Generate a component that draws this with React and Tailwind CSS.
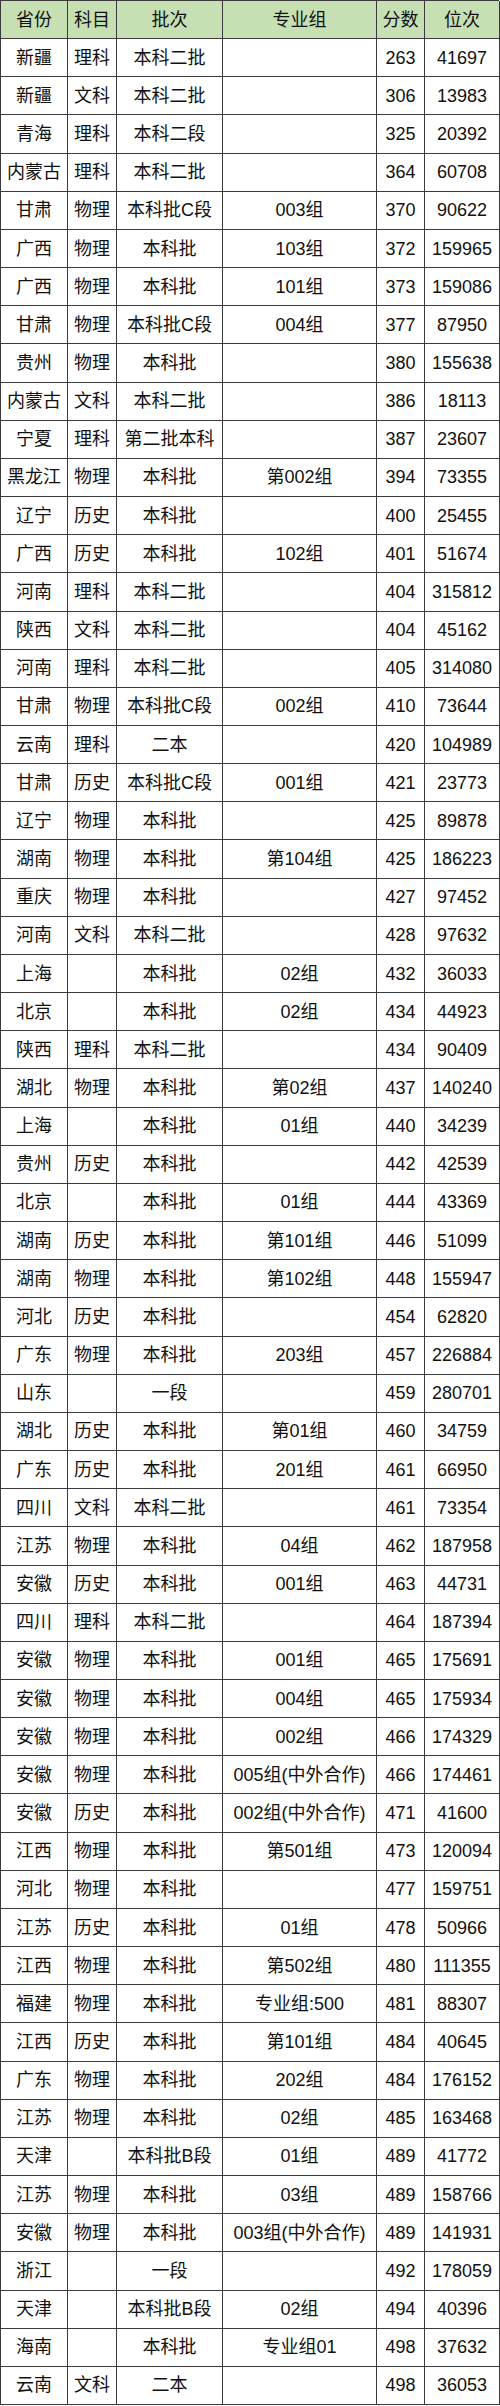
const rows = [
  ["新疆", "理科", "本科二批", "", "263", "41697"],
  ["新疆", "文科", "本科二批", "", "306", "13983"],
  ["青海", "理科", "本科二段", "", "325", "20392"],
  ["内蒙古", "理科", "本科二批", "", "364", "60708"],
  ["甘肃", "物理", "本科批C段", "003组", "370", "90622"],
  ["广西", "物理", "本科批", "103组", "372", "159965"],
  ["广西", "物理", "本科批", "101组", "373", "159086"],
  ["甘肃", "物理", "本科批C段", "004组", "377", "87950"],
  ["贵州", "物理", "本科批", "", "380", "155638"],
  ["内蒙古", "文科", "本科二批", "", "386", "18113"],
  ["宁夏", "理科", "第二批本科", "", "387", "23607"],
  ["黑龙江", "物理", "本科批", "第002组", "394", "73355"],
  ["辽宁", "历史", "本科批", "", "400", "25455"],
  ["广西", "历史", "本科批", "102组", "401", "51674"],
  ["河南", "理科", "本科二批", "", "404", "315812"],
  ["陕西", "文科", "本科二批", "", "404", "45162"],
  ["河南", "理科", "本科二批", "", "405", "314080"],
  ["甘肃", "物理", "本科批C段", "002组", "410", "73644"],
  ["云南", "理科", "二本", "", "420", "104989"],
  ["甘肃", "历史", "本科批C段", "001组", "421", "23773"],
  ["辽宁", "物理", "本科批", "", "425", "89878"],
  ["湖南", "物理", "本科批", "第104组", "425", "186223"],
  ["重庆", "物理", "本科批", "", "427", "97452"],
  ["河南", "文科", "本科二批", "", "428", "97632"],
  ["上海", "", "本科批", "02组", "432", "36033"],
  ["北京", "", "本科批", "02组", "434", "44923"],
  ["陕西", "理科", "本科二批", "", "434", "90409"],
  ["湖北", "物理", "本科批", "第02组", "437", "140240"],
  ["上海", "", "本科批", "01组", "440", "34239"],
  ["贵州", "历史", "本科批", "", "442", "42539"],
  ["北京", "", "本科批", "01组", "444", "43369"],
  ["湖南", "历史", "本科批", "第101组", "446", "51099"],
  ["湖南", "物理", "本科批", "第102组", "448", "155947"],
  ["河北", "历史", "本科批", "", "454", "62820"],
  ["广东", "物理", "本科批", "203组", "457", "226884"],
  ["山东", "", "一段", "", "459", "280701"],
  ["湖北", "历史", "本科批", "第01组", "460", "34759"],
  ["广东", "历史", "本科批", "201组", "461", "66950"],
  ["四川", "文科", "本科二批", "", "461", "73354"],
  ["江苏", "物理", "本科批", "04组", "462", "187958"],
  ["安徽", "历史", "本科批", "001组", "463", "44731"],
  ["四川", "理科", "本科二批", "", "464", "187394"],
  ["安徽", "物理", "本科批", "001组", "465", "175691"],
  ["安徽", "物理", "本科批", "004组", "465", "175934"],
  ["安徽", "物理", "本科批", "002组", "466", "174329"],
  ["安徽", "物理", "本科批", "005组(中外合作)", "466", "174461"],
  ["安徽", "历史", "本科批", "002组(中外合作)", "471", "41600"],
  ["江西", "物理", "本科批", "第501组", "473", "120094"],
  ["河北", "物理", "本科批", "", "477", "159751"],
  ["江苏", "历史", "本科批", "01组", "478", "50966"],
  ["江西", "物理", "本科批", "第502组", "480", "111355"],
  ["福建", "物理", "本科批", "专业组:500", "481", "88307"],
  ["江西", "历史", "本科批", "第101组", "484", "40645"],
  ["广东", "物理", "本科批", "202组", "484", "176152"],
  ["江苏", "物理", "本科批", "02组", "485", "163468"],
  ["天津", "", "本科批B段", "01组", "489", "41772"],
  ["江苏", "物理", "本科批", "03组", "489", "158766"],
  ["安徽", "物理", "本科批", "003组(中外合作)", "489", "141931"],
  ["浙江", "", "一段", "", "492", "178059"],
  ["天津", "", "本科批B段", "02组", "494", "40396"],
  ["海南", "", "本科批", "专业组01", "498", "37632"],
  ["云南", "文科", "二本", "", "498", "36053"],
];

const headers = ["省份", "科目", "批次", "专业组", "分数", "位次"];

function Cell({ children, head }) {
  return (
    <div
      className={
        "flex items-center justify-center whitespace-nowrap border-r border-b border-[#3a3a3a] text-[18px] leading-none text-[#111] " +
        (head ? "bg-[#c6e0b4]" : "bg-white")
      }
    >
      {children}
    </div>
  );
}

export default function App() {
  return (
    <div
      className="h-[2406px] w-[500px] bg-white"
      style={{ fontFamily: '"Liberation Sans", "Noto Sans CJK SC", sans-serif' }}
    >
      <div className="grid h-[2405px] w-[499px] grid-cols-[67px_49px_106px_154px_48px_75px] grid-rows-[repeat(63,minmax(0,1fr))] border-t border-l border-[#3a3a3a]">
        {headers.map((h) => (
          <Cell key={h} head>
            {h}
          </Cell>
        ))}
        {rows.map((r, i) =>
          r.map((v, j) => <Cell key={i + "-" + j}>{v}</Cell>)
        )}
      </div>
    </div>
  );
}
